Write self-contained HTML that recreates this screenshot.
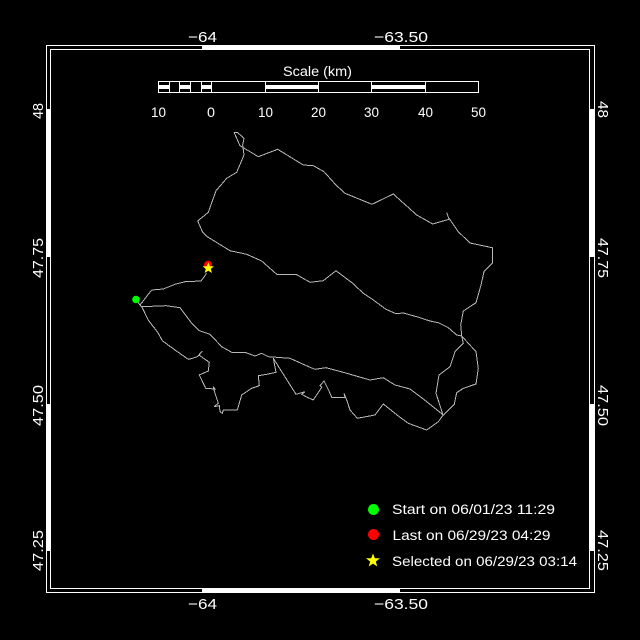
<!DOCTYPE html>
<html>
<head>
<meta charset="utf-8">
<style>
html,body{margin:0;padding:0;background:#000;width:640px;height:640px;overflow:hidden}
svg{display:block}
text{font-family:"Liberation Sans",sans-serif;fill:#fff;font-size:15px}
text.s{font-size:13.5px}
polyline.t{fill:none;stroke:#b8b8b8;stroke-width:1;shape-rendering:crispEdges}
</style>
</head>
<body>
<svg width="640" height="640" viewBox="0 0 640 640" xmlns="http://www.w3.org/2000/svg">
<rect width="640" height="640" fill="#000"/>
<g fill="none" stroke="#fff" stroke-width="1" shape-rendering="crispEdges">
<rect x="46.5" y="45.5" width="548" height="547"/>
<rect x="50.5" y="49.5" width="539" height="539"/>
</g>
<g fill="#fff" shape-rendering="crispEdges">
<rect x="202" y="45" width="198" height="5"/>
<rect x="202" y="588" width="198" height="5"/>
<rect x="46" y="109" width="5" height="148"/>
<rect x="46" y="404" width="5" height="147"/>
<rect x="590" y="109" width="5" height="148"/>
<rect x="590" y="404" width="5" height="147"/>
</g>

<text x="188" y="42" textLength="29" lengthAdjust="spacingAndGlyphs">−64</text>
<text x="374" y="42" textLength="54" lengthAdjust="spacingAndGlyphs">−63.50</text>
<text x="188" y="609" textLength="29" lengthAdjust="spacingAndGlyphs">−64</text>
<text x="374" y="609" textLength="54" lengthAdjust="spacingAndGlyphs">−63.50</text>

<text transform="translate(43,119) rotate(-90)" textLength="16" lengthAdjust="spacingAndGlyphs">48</text>
<text transform="translate(43,278) rotate(-90)" textLength="40" lengthAdjust="spacingAndGlyphs">47.75</text>
<text transform="translate(43,426) rotate(-90)" textLength="41" lengthAdjust="spacingAndGlyphs">47.50</text>
<text transform="translate(43,571) rotate(-90)" textLength="41" lengthAdjust="spacingAndGlyphs">47.25</text>
<text transform="translate(598,101) rotate(90)" textLength="17" lengthAdjust="spacingAndGlyphs">48</text>
<text transform="translate(598,238) rotate(90)" textLength="40" lengthAdjust="spacingAndGlyphs">47.75</text>
<text transform="translate(598,385) rotate(90)" textLength="41" lengthAdjust="spacingAndGlyphs">47.50</text>
<text transform="translate(598,530) rotate(90)" textLength="41" lengthAdjust="spacingAndGlyphs">47.25</text>

<text class="s" x="283" y="76" textLength="69" lengthAdjust="spacingAndGlyphs">Scale (km)</text>
<g shape-rendering="crispEdges">
<rect x="158.5" y="81.5" width="320" height="11" fill="none" stroke="#fff"/>
<g fill="#fff">
<rect x="158" y="85" width="12" height="4"/>
<rect x="180" y="85" width="11" height="4"/>
<rect x="201" y="85" width="11" height="4"/>
<rect x="265" y="85" width="54" height="4"/>
<rect x="372" y="85" width="54" height="4"/>
<rect x="169" y="81" width="1" height="11"/>
<rect x="179" y="81" width="1" height="11"/>
<rect x="190" y="81" width="1" height="11"/>
<rect x="201" y="81" width="1" height="11"/>
<rect x="211" y="81" width="1" height="11"/>
<rect x="265" y="81" width="1" height="11"/>
<rect x="318" y="81" width="1" height="11"/>
<rect x="371" y="81" width="1" height="11"/>
<rect x="425" y="81" width="1" height="11"/>
</g>
</g>
<text class="s" x="151" y="117" textLength="15" lengthAdjust="spacingAndGlyphs">10</text>
<text class="s" x="207" y="117" textLength="8" lengthAdjust="spacingAndGlyphs">0</text>
<text class="s" x="258" y="117" textLength="15" lengthAdjust="spacingAndGlyphs">10</text>
<text class="s" x="311" y="117" textLength="15" lengthAdjust="spacingAndGlyphs">20</text>
<text class="s" x="364" y="117" textLength="15" lengthAdjust="spacingAndGlyphs">30</text>
<text class="s" x="418" y="117" textLength="15" lengthAdjust="spacingAndGlyphs">40</text>
<text class="s" x="471" y="117" textLength="15" lengthAdjust="spacingAndGlyphs">50</text>

<polyline class="t" points="234,132.3 237.3,132.3 244,138.3 242.7,145 244,155 236.7,172.3 226.7,178.3 216,190.7 208.3,212.3 197.7,221 202.7,232.3 207.3,236.7 230,250.7 246.7,254.3 261.7,261 276.7,274.3 296.7,274.7 310,282.3 323.3,280.7 336,270.7 352.7,283.3 363.3,293.3 373.3,300 386,309.3 396,313.7 403.3,313 416.7,316.7 430,321 438.3,322.7 448.3,327.7 456.7,335 461.7,336 476,351.7 478.3,368.3 476,384 463.3,388.3 456.7,392.7 454.3,404 443.3,415 438.3,421.7 426.7,430 408.3,423.3 398.3,416 383.3,404 375,415 357.3,418.3 350,410 347.3,401.7 344,393.3 345,397.3 331.7,397.3 329.3,391.7 324,381 320,385.7 321.7,387.3 313.3,400 306,396.7 301.7,394.3 305,391.7 296,394.3 273.3,358.3 276,372.3 266.7,374.3 258.3,375.7 259.3,385.7 251.7,388.3 241.7,395 237.3,410 223.3,410 222.3,413.3 220,411.7 219.3,405.7 214,406.7 218.3,403.3 214,390 213.3,386.7 215,389 205.7,388.3 199.3,375 208.3,371 209.3,362.3 199,355 202.3,351 197.3,356.7 190,359 188.3,359.3 175,350 162.3,340.7 158.3,333.3 148.3,320 141.7,306.7"/>
<polyline class="t" points="234,132.3 240,145.7 258.3,156.7 277.7,149.3 303.3,165 313.3,165.7 324,171.7 336,185 345,193.3 372,204.3 393.3,194 416.7,215 432.7,224 449,219.3 446.7,212.3"/>
<polyline class="t" points="449,218.3 458.3,231.7 470,243 492.3,247.7 492.3,263.3 484,271.7 481,285 476,302.7 463.3,311 460.7,325 461.7,336 463.3,343.3 455,351.7 450,366.7 439,375 436,393.3 442.7,414"/>
<polyline class="t" points="136,299.3 140,305 141.7,306.7 166,305.7 180,307.7 191.7,323.3 199.3,330.7 210,334.3 221.7,346.7 231.7,352.3 245,352.3 255,356 261.7,353.3 268.3,356.7 290,358.3 310,367.3 315,369.3 326,367.7 343.3,372.3 370,380 383.3,377.7 395,385 410,389 423.3,399 443.3,415"/>
<polyline class="t" points="140,305 151.7,290 163.3,289 175,284.3 185,281.7 201,281 206.7,273.3"/>

<circle cx="136" cy="299.5" r="3.8" fill="#0f0"/>
<circle cx="208" cy="264.8" r="4" fill="#f00"/>
<polygon points="208.3,262.5 209.9,266.2 214,266.2 210.8,269 212,273 208.3,270.8 204.6,273 205.8,269 202.6,266.2 206.7,266.2" fill="#ff0"/>

<circle cx="373.5" cy="509.5" r="5.5" fill="#0f0"/>
<circle cx="373.5" cy="534.5" r="5.5" fill="#f00"/>
<polygon points="373,553.5 374.8,558.3 380,558.3 375.8,561.6 377.3,566.5 373,563.6 368.7,566.5 370.2,561.6 366,558.3 371.2,558.3" fill="#ff0"/>

<text class="s" x="392" y="514" textLength="163" lengthAdjust="spacingAndGlyphs">Start on 06/01/23 11:29</text>
<text class="s" x="392.5" y="540" textLength="158" lengthAdjust="spacingAndGlyphs">Last on 06/29/23 04:29</text>
<text class="s" x="392" y="566" textLength="185" lengthAdjust="spacingAndGlyphs">Selected on 06/29/23 03:14</text>
</svg>
</body>
</html>
